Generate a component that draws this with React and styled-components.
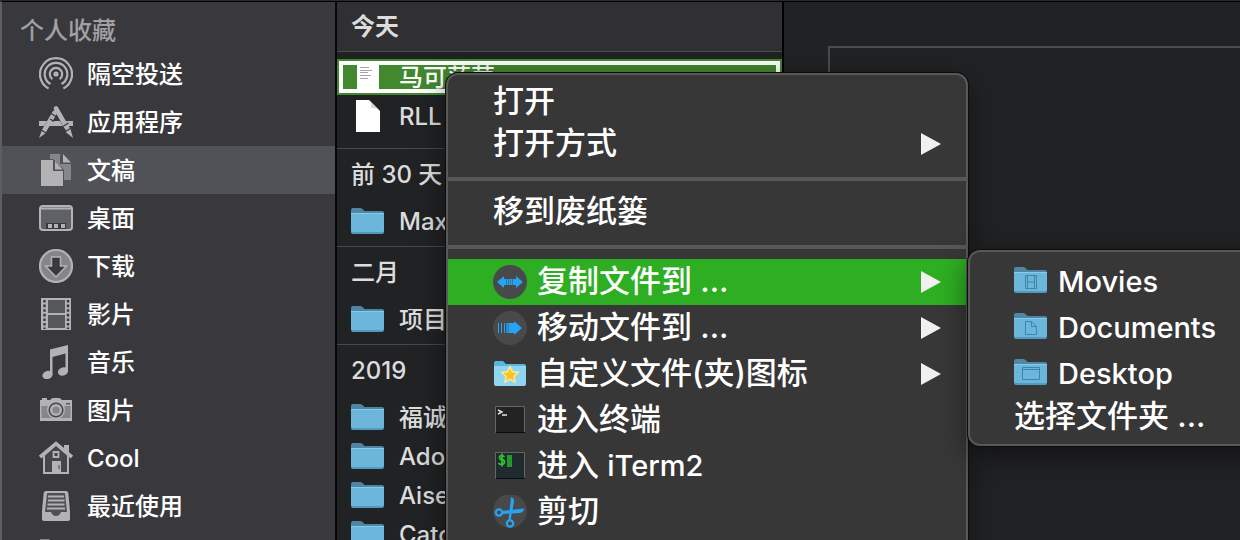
import React from 'react';
import styled, { createGlobalStyle } from 'styled-components';

const GlobalStyle = createGlobalStyle`
  * {
    box-sizing: border-box;
  }

  body {
    margin: 0;
    overflow: hidden;
    background: #212224;
    font-family: Inter, "Noto Sans CJK SC", sans-serif;
    font-weight: 500;
  }

  button {
    border: 0;
    background: none;
    color: inherit;
    font: inherit;
    text-align: left;
    white-space: nowrap;
  }
`;

const Window = styled.div`
  position: relative;
  display: grid;
  grid-template-columns: 337px 447px 1fr;
  height: 100vh;
  overflow: hidden;
  border-top: 1px solid #2b2b2d;
`;

const Sidebar = styled.nav`
  overflow: hidden;
  background: #39393d;
  border-top: 1px solid #000;
  border-left: 2px solid #5c5d60;
  border-right: 2px solid #070708;
`;

const SidebarTitle = styled.h2`
  height: 48px;
  margin: 0;
  padding: 5px 0 0 18px;
  color: #a1a1a4;
  font-size: 24px;
  font-weight: 500;
  line-height: 48px;
`;

const SidebarItem = styled.button`
  display: flex;
  align-items: center;
  gap: 14px;
  width: 100%;
  height: 48px;
  padding: 0 0 0 37px;
  background: ${props => (props.$active ? '#515257' : 'transparent')};
  color: #fff;
  font-size: 24px;
`;

/* Chinese glyphs sit low in the line box, the padding lifts them back to the middle */
const Label = styled.span`
  padding-bottom: ${props => (props.$large ? '8px' : '4px')};
`;

const Latin = styled.span`
  font-size: 29px;
`;

const FileColumn = styled.section`
  overflow: hidden;
  background: #212224;
  border-top: 1px solid #000;
  border-right: 2px solid #000;
`;

const Group = styled.div`
  padding-bottom: ${props => (props.$first ? '12px' : '5px')};
`;

const GroupTitle = styled.h3`
  height: ${props => (props.$first ? '50px' : '52px')};
  margin: 0 0 ${props => (props.$first ? '7px' : '2px')};
  padding-left: 14px;
  background: ${props => (props.$first ? '#303033' : 'transparent')};
  border-top: ${props => (props.$first ? '0' : '1px solid #47484a')};
  border-bottom: ${props => (props.$first ? '1px solid #4b4d4b' : '0')};
  color: #dcdcdd;
  font-size: 24px;
  font-weight: ${props => (props.$first ? 600 : 500)};
  line-height: ${props => (props.$first ? '50px' : '52px')};
`;

const FileRow = styled.button`
  display: flex;
  align-items: center;
  gap: 14px;
  width: 100%;
  height: 39px;
  padding: 0 0 0 14px;
  color: #dcdcdd;
  font-size: 24px;
`;

const SelectedRow = styled(FileRow)`
  height: 36px;
  margin-bottom: 2px;
  padding-left: 12px;
  overflow: hidden;
  background: #42882f;
  border: 2px solid #42882f;
  outline: 4px solid #fff;
  outline-offset: -6px;
  color: #fff;
`;

const Extension = styled.span`
  color: #b4d3aa;
`;

const Preview = styled.main`
  padding: 44px 0 0 44px;
  border-top: 1px solid #000;
`;

const PreviewFrame = styled.div`
  height: 100vh;
  border-top: 2px solid #4a4b4d;
  border-left: 2px solid #4a4b4d;
`;

const Panel = styled.div`
  position: absolute;
  padding: 6px 0;
  background: #373737;
  border: 2px solid #585859;
  border-radius: 12px;
  box-shadow: 0 0 0 1px #0c0c0c, 0 8px 28px rgba(0, 0, 0, 0.5);
`;

const ContextMenu = styled(Panel)`
  top: 72px;
  left: 446px;
  width: 522px;
  height: 100vh;
`;

const Submenu = styled(Panel)`
  top: -9px;
  left: 100%;
  width: 310px;
  margin-left: 2px;
`;

const MenuEntry = styled.div`
  position: relative;
`;

const MenuItem = styled.button`
  display: flex;
  align-items: center;
  gap: 10px;
  width: 100%;
  height: ${props => (props.$tall ? '46px' : '42px')};
  padding: 0 25px 0 45px;
  background: ${props => (props.$active ? '#2eae22' : 'transparent')};
  color: #fff;
  font-size: 31px;
`;

const SubmenuItem = styled(MenuItem)`
  padding-left: 44px;
  font-size: ${props => (props.$tall ? '29px' : '31px')};
`;

const Separator = styled.hr`
  height: 4px;
  margin: 12px 0 10px;
  border: 0;
  background: #585858;
`;

const Arrow = styled.svg`
  margin-left: auto;
`;

const Icon = styled.svg`
  flex: none;
`;

const LIGHT = '#b3b3b6';
const MID = '#85868a';

const sidebarIcons = {
  airdrop: (
    <g fill="none" stroke={LIGHT} strokeWidth="2.2">
      <circle cx="17" cy="17" r="2.6" fill={LIGHT} stroke="none" />
      <path d="M13.500 22.200a6.200 6.200 0 1 1 7 0" />
      <path d="M11.500 27a11.300 11.300 0 1 1 11 0" />
      <path d="M9.600 31.400a16 16 0 1 1 14.800 0" />
    </g>
  ),
  apps: (
    <g>
      <path fill={LIGHT} d="M0 16h8l-3 5H0zM13 16h8l3 5H10zM27 16h7v5h-5z" />
      <g stroke={LIGHT} strokeWidth="4.600" strokeLinecap="round">
        <path d="M15.500 8L5.500 25" />
        <path d="M17 3.500L29 24.500" />
      </g>
      <path fill={LIGHT} d="M3 25l4.500 2.500L0 33zM26.500 27l5-3 2.500 9z" />
      <path stroke="#39393d" strokeWidth="1.200" d="M2 25l6 3.500M25.500 27l6-3.500M12 8.500l5 3M11 14l4 2.500M24.500 21l5-3" />
    </g>
  ),
  documents: (
    <g>
      <path fill={MID} d="M11 1h10v10h11v16H11z" />
      <path fill={LIGHT} d="M24 1l8 8.500h-8z" />
      <path fill="#515257" d="M1 6h13l11 11v16H1z" />
      <path fill={LIGHT} d="M2 7h12v11h10v15H2z" />
      <path fill={LIGHT} d="M16 8l7.500 8.500H16z" />
    </g>
  ),
  desktop: (
    <g>
      <rect x="1" y="5" width="32" height="24" rx="3" fill="#606166" stroke={LIGHT} strokeWidth="2" />
      <path d="M2 7.500h30" stroke={LIGHT} strokeWidth="2" />
      <path fill="#39393d" d="M7 22h20v6H7z" />
      <path fill={LIGHT} d="M9 23h4v4H9zM15 23h4v4h-4zM22 23h4v4h-4z" />
    </g>
  ),
  downloads: (
    <g>
      <circle cx="17" cy="17" r="16" fill={MID} stroke={LIGHT} strokeWidth="2.200" />
      <path fill="#39393d" stroke={LIGHT} strokeWidth="1.500" d="M12.500 8h9v9h6L17 28 6.500 17h6z" />
    </g>
  ),
  movies: (
    <g>
      <path fill={LIGHT} d="M2 1h30v32H2z" />
      <path fill="#56575b" d="M9 3h17v13H9zM9 18h17v13H9z" />
      <path stroke="#39393d" strokeWidth="2.400" strokeDasharray="2.600 2" d="M5.500 3v29M29 3v29" />
    </g>
  ),
  music: (
    <g fill={LIGHT}>
      <path d="M11 4.500L29 0v25.500h-2.500V8.500L13.500 12v18H11z" />
      <ellipse cx="8.500" cy="30" rx="5.200" ry="4" transform="rotate(-20 8.500 30)" />
      <ellipse cx="24" cy="26.500" rx="5.200" ry="4" transform="rotate(-20 24 26.500)" />
    </g>
  ),
  pictures: (
    <g>
      <path fill={LIGHT} d="M3 5h5v2H3zM1 7h10l2.500-2h7L23 7h10v21H1z" />
      <path fill={MID} d="M2.500 13h29v12h-29z" />
      <circle cx="17" cy="17" r="9" fill={LIGHT} />
      <circle cx="17" cy="17" r="6.800" fill={LIGHT} stroke="#45464a" strokeWidth="1.500" />
      <circle cx="17" cy="17" r="3.600" fill={MID} />
      <path fill="#56575b" d="M27 10h4v1.500h-4z" />
    </g>
  ),
  home: (
    <g>
      <path fill={LIGHT} d="M25 4h5v11h-5z" />
      <path fill="#45464a" stroke={LIGHT} strokeWidth="2" d="M5 14L17 3l12 11v18H5z" />
      <path fill="none" stroke={LIGHT} strokeWidth="3.600" d="M1 16L17 2.500 33 16" />
      <path fill="none" stroke={LIGHT} strokeWidth="1.800" d="M14.500 11h5v5h-5z" />
      <path fill={LIGHT} d="M13 20h9v12h-9z" />
      <path stroke="#45464a" d="M20 24v4" />
    </g>
  ),
  recents: (
    <g>
      <path fill={LIGHT} d="M7 2h20q2 0 2.300 2L31 22v8q0 2-2 2H5q-2 0-2-2v-8L4.700 4Q5 2 7 2z" />
      <path fill="#505155" d="M8 4h18l2 19h-6q-1.500 4-5 4t-5-4H6z" />
      <path stroke={LIGHT} strokeWidth="2" d="M9 7.500h16M9 11.500h16.500M8.500 15.500h17M8 19.500h18" />
    </g>
  ),
  folder: <path fill={MID} d="M1 2h9l3 3h20v24H1z" />,
};

const favorites = [
  { icon: 'airdrop', label: '隔空投送' },
  { icon: 'apps', label: '应用程序' },
  { icon: 'documents', label: '文稿', active: true },
  { icon: 'desktop', label: '桌面' },
  { icon: 'downloads', label: '下载' },
  { icon: 'movies', label: '影片' },
  { icon: 'music', label: '音乐' },
  { icon: 'pictures', label: '图片' },
  { icon: 'home', label: 'Cool' },
  { icon: 'recents', label: '最近使用' },
  { icon: 'folder', label: '' },
];

const groups = [
  { title: '前 30 天', files: ['Max'] },
  { title: '二月', files: ['项目'] },
  { title: '2019', files: ['福诚', 'Ado', 'Aise', 'Catc'] },
];

const hasChinese = text => /[\u4e00-\u9fff]/.test(text);

function Name({ children }) {
  return hasChinese(children) ? <Label>{children}</Label> : <span>{children}</span>;
}

function FolderIcon({ children }) {
  return (
    <Icon width="34" height="28" viewBox="0 0 34 28">
      <path fill="#4f86a5" d="M0 2q0-2 2-2h7q1.500 0 2.500 1l2 2H31q2 0 2 2v6H0z" />
      <path fill="#6bb6da" d="M0 5h33v18q0 2-2 2H2q-2 0-2-2z" />
      <path fill="#87cbea" d="M0 5h33v1H0z" />
      <path fill="#5199bd" d="M0 24h33q0 2-2 2H2q-2 0-2-2z" />
      {children}
    </Icon>
  );
}

function PageIcon({ lines }) {
  return (
    <Icon width="34" height="34" viewBox="0 0 34 34">
      {lines ? (
        <g>
          <path fill="#fff" d="M6 0h22v34H6z" />
          <path stroke="#a5a5a5" d="M9 7.500h9M9 10.500h12M9 12.500h8M9 15.500h11M9 18.500h8" />
        </g>
      ) : (
        <g>
          <path fill="#fff" d="M5 0h13l11 11v21H5z" />
          <path fill="#d3d3d3" d="M18 0l11 11q-5-4-9-3 1-4-2-8z" />
        </g>
      )}
    </Icon>
  );
}

function MenuIcon({ name }) {
  return (
    <Icon width="34" height="34" viewBox="0 0 34 34">
      {name === 'copy' && (
        <g>
          <circle cx="17" cy="17" r="17" fill="#48494b" />
          <path fill="#25a4f3" d="M4 17l7-6v3h2v6h-2v3zM30 17l-7-6v3h-3v6h3v3zM13.500 14h1.500v6h-1.500zM15.500 14h2v6h-2zM18 14h1.500v6H18z" />
        </g>
      )}
      {name === 'move' && (
        <g>
          <circle cx="17" cy="17" r="17" fill="#48494b" />
          <path fill="#25a4f3" d="M5 12h1v10H5zM8 12h1v10H8zM11 12h1v10h-1zM13.500 12h2v10h-2zM16 12h5v-2l8 7-8 7v-2h-5z" />
        </g>
      )}
      {name === 'star' && (
        <g>
          <path fill="#58b7df" d="M1 6q0-2 2-2h7l3 3h18q2 0 2 2v5H1z" />
          <path fill="#8fd5f2" d="M1 9h32v18q0 2-2 2H3q-2 0-2-2z" />
          <path fill="#f8c51d" stroke="#fbe7a0" strokeWidth="1.500" d="M17 9.500l2.500 5.200 5.800.7-4.300 4 1.100 5.700-5.100-2.800-5.100 2.800 1.100-5.700-4.300-4 5.800-.7z" />
        </g>
      )}
      {name === 'terminal' && (
        <g>
          <path fill="#232323" stroke="#656565" d="M2.500 3.500h29v26h-29z" />
          <path stroke="#0c0c0c" d="M3 29.500h29" />
          <path fill="none" stroke="#e6e6e6" strokeWidth="1.400" d="M5 7l4 2-4 2M9 12h5" />
        </g>
      )}
      {name === 'iterm' && (
        <g>
          <path fill="#202b30" stroke="#656565" d="M2.500 3.500h29v26h-29z" />
          <path stroke="#0c0c0c" d="M3 29.500h29" />
          <path fill="none" stroke="#2fc332" strokeWidth="1.700" d="M11.500 8q-1-1.500-3-1.500Q6.500 6.500 6.500 8.500t2.500 2.200 2.500 2.300-3 2.500q-2 0-3-1.500M9 4.500v13" />
          <path fill="#229a28" d="M14 6h5v12h-5z" />
        </g>
      )}
      {name === 'scissors' && (
        <g>
          <circle cx="17" cy="16" r="17" fill="#48494b" />
          <g fill="none" stroke="#25a4f3" strokeWidth="2.200">
            <circle cx="6" cy="17.500" r="3.200" />
            <circle cx="17" cy="28.500" r="3.200" />
          </g>
          <path fill="#25a4f3" d="M15.500 25.500L18 2q3.500 1 3 5l-3.500 18.500zM9 16l22-2.500q0 3.500-4 4.500L9 19z" />
        </g>
      )}
    </Icon>
  );
}

function SubmenuArrow() {
  return (
    <Arrow width="20" height="22" viewBox="0 0 20 22">
      <path fill="#f0f0f0" d="M0 0l20 11L0 22z" />
    </Arrow>
  );
}

function FinderSidebar() {
  return (
    <Sidebar>
      <SidebarTitle>个人收藏</SidebarTitle>
      {favorites.map(item => (
        <SidebarItem key={item.icon} $active={item.active}>
          <Icon width="34" height="34" viewBox="0 0 34 34">
            {sidebarIcons[item.icon]}
          </Icon>
          <Name>{item.label}</Name>
        </SidebarItem>
      ))}
    </Sidebar>
  );
}

function FileList() {
  return (
    <FileColumn>
      <Group $first>
        <GroupTitle $first>今天</GroupTitle>
        <SelectedRow>
          <PageIcon lines />
          <Label>马可菠萝<Extension>.pages</Extension></Label>
        </SelectedRow>
        <FileRow>
          <PageIcon />
          <Name>RLL</Name>
        </FileRow>
      </Group>
      {groups.map(group => (
        <Group key={group.title}>
          <GroupTitle>{group.title}</GroupTitle>
          {group.files.map(file => (
            <FileRow key={file}>
              <FolderIcon />
              <Name>{file}</Name>
            </FileRow>
          ))}
        </Group>
      ))}
    </FileColumn>
  );
}

function CopySubmenu() {
  return (
    <Submenu>
      <SubmenuItem $tall>
        <FolderIcon>
          <path fill="none" stroke="#3d84aa" d="M11.500 8.500h11v13h-11zM13.500 8.500v13M20.500 8.500v13M13.500 15h7" />
        </FolderIcon>
        Movies
      </SubmenuItem>
      <SubmenuItem $tall>
        <FolderIcon>
          <path fill="none" stroke="#3d84aa" d="M11.500 8.500h6l5 5v8h-11zM17.500 8.500v5h5" />
        </FolderIcon>
        Documents
      </SubmenuItem>
      <SubmenuItem $tall>
        <FolderIcon>
          <path fill="none" stroke="#3d84aa" d="M8.500 8.500h17v12h-17zM8.500 10.500h17" />
        </FolderIcon>
        Desktop
      </SubmenuItem>
      <SubmenuItem><Label $large>选择文件夹 ...</Label></SubmenuItem>
    </Submenu>
  );
}

function FileMenu() {
  return (
    <ContextMenu>
      <MenuItem><Label $large>打开</Label></MenuItem>
      <MenuItem><Label $large>打开方式</Label><SubmenuArrow /></MenuItem>
      <Separator />
      <MenuItem><Label $large>移到废纸篓</Label></MenuItem>
      <Separator />
      <MenuEntry>
        <MenuItem $tall $active>
          <MenuIcon name="copy" />
          <Label $large>复制文件到 ...</Label>
          <SubmenuArrow />
        </MenuItem>
        <CopySubmenu />
      </MenuEntry>
      <MenuItem $tall>
        <MenuIcon name="move" />
        <Label $large>移动文件到 ...</Label>
        <SubmenuArrow />
      </MenuItem>
      <MenuItem $tall>
        <MenuIcon name="star" />
        <Label $large>自定义文件(夹)图标</Label>
        <SubmenuArrow />
      </MenuItem>
      <MenuItem $tall>
        <MenuIcon name="terminal" />
        <Label $large>进入终端</Label>
      </MenuItem>
      <MenuItem $tall>
        <MenuIcon name="iterm" />
        <Label $large>进入 <Latin>iTerm2</Latin></Label>
      </MenuItem>
      <MenuItem $tall>
        <MenuIcon name="scissors" />
        <Label $large>剪切</Label>
      </MenuItem>
    </ContextMenu>
  );
}

function App() {
  return (
    <>
      <GlobalStyle />
      <Window>
        <FinderSidebar />
        <FileList />
        <Preview>
          <PreviewFrame />
        </Preview>
        <FileMenu />
      </Window>
    </>
  );
}

export default App;
